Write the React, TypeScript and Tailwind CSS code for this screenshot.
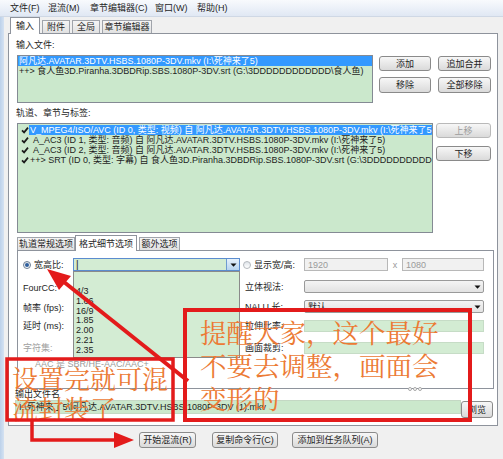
import React from "react";

const UI = "font-['Liberation_Sans','Noto_Sans_CJK_SC',sans-serif]";

function Btn({
  children,
  className = "",
  disabled = false,
}: {
  children: React.ReactNode;
  className?: string;
  disabled?: boolean;
}) {
  return (
    <div
      className={
        "flex items-center justify-center rounded-[3px] border bg-gradient-to-b from-[#f7f7f7] to-[#dadada] whitespace-nowrap " +
        (disabled ? "border-[#b9b9b9] text-[#9c9c9c] " : "border-[#8a8a8a] text-[#1e1e1e] ") +
        className
      }
    >
      {children}
    </div>
  );
}

function Check() {
  return (
    <svg width="8" height="8" viewBox="0 0 8 8">
      <path d="M1 4.3 L3.1 6.4 L7 1.6" fill="none" stroke="#1b1b1b" strokeWidth="1.7" />
    </svg>
  );
}

function Radio({ checked = false, disabled = false }: { checked?: boolean; disabled?: boolean }) {
  return (
    <div
      className={
        "w-[8px] h-[8px] shrink-0 rounded-full border flex items-center justify-center bg-gradient-to-b from-[#dfe4ea] to-[#ffffff] " +
        (disabled ? "border-[#b4b8bd]" : "border-[#6f7f94]")
      }
    >
      {checked && <div className="w-[4px] h-[4px] rounded-full bg-[#2f5f9e]" />}
    </div>
  );
}

function Arrow() {
  return (
    <svg width="7" height="4" viewBox="0 0 7 4">
      <path d="M0.5 0.5 L6.5 0.5 L3.5 3.8 Z" fill="#111" />
    </svg>
  );
}

function Combo({ className = "", text = "" }: { className?: string; text?: string }) {
  return (
    <div
      className={
        "flex items-center border rounded-[2px] border-[#9a9a9a] bg-gradient-to-b from-[#f4f4f4] to-[#e2e2e2] " +
        className
      }
    >
      <div className="flex-1 pl-[3px] leading-[10px] whitespace-nowrap overflow-hidden">{text}</div>
      <div className="w-[12px] h-full flex items-center justify-center">
        <Arrow />
      </div>
    </div>
  );
}

const TAB_OFF =
  "h-[13px] bg-gradient-to-b from-[#f5f5f5] to-[#e1e1e1] border border-b-0 border-[#a0a4ab] flex items-center justify-center whitespace-nowrap";
const TAB_ON =
  "relative z-10 -mb-px bg-white border border-b-0 border-[#8e939c] flex items-center justify-center whitespace-nowrap";

export default function App() {
  return (
    <div className={"relative w-[503px] h-[459px] overflow-hidden bg-[#f0f0f0] text-[9px] leading-[10px] text-[#1e1e1e] " + UI}>
      {/* menu bar */}
      <div className="h-[17px] flex items-center pl-[10px] bg-gradient-to-b from-[#f8fafd] to-[#e0e8f4] border-b border-[#cfd8e5] whitespace-nowrap">
        <span className="w-[38px]">文件(F)</span>
        <span className="w-[42px]">混流(M)</span>
        <span className="w-[65px]">章节编辑器(C)</span>
        <span className="w-[42px]">窗口(W)</span>
        <span>帮助(H)</span>
      </div>

      <div className="flex h-[442px]">
        <div className="w-[4px] bg-gradient-to-r from-[#bcd1ea] to-[#d5e2f2]" />
        <div className="w-[499px] pl-[4px] flex flex-col">
          {/* main tabs */}
          <div className="h-[16px] flex items-end pl-[2px]">
            <div className={TAB_ON + " w-[30px] h-[17px]"}>输入</div>
            <div className={TAB_OFF + " ml-[2px] w-[28px]"}>附件</div>
            <div className={TAB_OFF + " ml-[2px] w-[28px]"}>全局</div>
            <div className={TAB_OFF + " ml-[2px] w-[50px]"}>章节编辑器</div>
          </div>

          {/* outer panel */}
          <div className="w-[490px] h-[393px] bg-white border border-[#8e939c] flex flex-col pl-[7px] pt-[6px]">
            <div className="h-[10px]">输入文件:</div>
            <div className="mt-[5px] flex">
              <div className="ml-[1px] w-[356px] h-[48px] border border-[#848a94] bg-[#cbe8cc] overflow-hidden whitespace-nowrap">
                <div className="h-[10px] bg-[#3399ff] text-white pl-[1px]">{"阿凡达.AVATAR.3DTV.HSBS.1080P-3DV.mkv (I:\\死神来了5)"}</div>
                <div className="h-[10px] pl-[1px]">{"++> 食人鱼3D.Piranha.3DBDRip.SBS.1080P-3DV.srt (G:\\3DDDDDDDDDDDD\\食人鱼)"}</div>
              </div>
              <div className="ml-[6px] mt-[1px] grid grid-cols-[52px_53px] gap-x-[7px] gap-y-[6px] h-[37px]">
                <Btn className="h-[15px]">添加</Btn>
                <Btn className="h-[15px]">追加合并</Btn>
                <Btn className="h-[16px]">移除</Btn>
                <Btn className="h-[16px]">全部移除</Btn>
              </div>
            </div>

            <div className="mt-[5px] h-[10px]">轨道、章节与标签:</div>
            <div className="mt-[5px] flex">
              <div className="ml-[1px] w-[416px] h-[110px] border border-[#848a94] bg-[#cbe8cc] overflow-hidden whitespace-nowrap pt-[1px]">
                <div className="h-[10px] flex">
                  <div className="w-[14px] pl-[3px] flex items-center"><Check /></div>
                  <div className="flex-1 bg-[#3399ff] text-white pl-[1px]">{"V_MPEG4/ISO/AVC (ID 0, 类型: 视频) 自 阿凡达.AVATAR.3DTV.HSBS.1080P-3DV.mkv (I:\\死神来了5)"}</div>
                </div>
                <div className="h-[10px] flex">
                  <div className="w-[14px] pl-[3px] flex items-center"><Check /></div>
                  <div className="flex-1 pl-[1px]">{"A_AC3 (ID 1, 类型: 音频) 自 阿凡达.AVATAR.3DTV.HSBS.1080P-3DV.mkv (I:\\死神来了5)"}</div>
                </div>
                <div className="h-[10px] flex">
                  <div className="w-[14px] pl-[3px] flex items-center"><Check /></div>
                  <div className="flex-1 pl-[1px]">{"A_AC3 (ID 2, 类型: 音频) 自 阿凡达.AVATAR.3DTV.HSBS.1080P-3DV.mkv (I:\\死神来了5)"}</div>
                </div>
                <div className="h-[10px] flex">
                  <div className="w-[14px] pl-[3px] flex items-center"><Check /></div>
                  <div className="flex-1 pl-[1px]">{"++> SRT (ID 0, 类型: 字幕) 自 食人鱼3D.Piranha.3DBDRip.SBS.1080P-3DV.srt (G:\\3DDDDDDDDDDDD\\食人鱼)"}</div>
                </div>
              </div>
              <div className="ml-[3px] w-[55px] flex flex-col">
                <Btn disabled className="h-[15px]">上移</Btn>
                <Btn className="mt-[8px] h-[15px]">下移</Btn>
              </div>
            </div>

            {/* inner tabs */}
            <div className="mt-[3px] ml-[1px] h-[14px] flex items-end">
              <div className={TAB_OFF + " w-[58px]"}>轨道常规选项</div>
              <div className={TAB_ON + " w-[62px] h-[16px]"}>格式细节选项</div>
              <div className={TAB_OFF + " ml-[2px] w-[41px]"}>额外选项</div>
            </div>

            {/* inner panel */}
            <div className="relative ml-[1px] w-[477px] h-[139px] border border-[#8e939c] bg-white flex flex-col whitespace-nowrap">
              <div className="mt-[7px] h-[13px] flex items-center">
                <div className="w-[222px] pl-[5px] flex items-center">
                  <Radio checked />
                  <span className="ml-[3px] w-[39px]">宽高比:</span>
                  <div className="w-[167px] h-[13px] border border-[#5b8ccf] bg-[#d3ecd3] flex items-center">
                    <div className="flex-1 pl-[2px] text-[10px] leading-[10px]">|</div>
                    <div className="w-[13px] h-[11px] bg-gradient-to-b from-[#e6f1fb] to-[#b7d4ef] border-l border-[#6e9bd0] flex items-center justify-center">
                      <Arrow />
                    </div>
                  </div>
                </div>
                <div className="ml-[3px] flex items-center">
                  <Radio disabled />
                  <span className="ml-[3px] w-[50px]">显示宽/高:</span>
                  <div className="w-[84px] h-[13px] border border-[#b8b8b8] bg-[#f1f1f1] text-[#9a9a9a] pl-[3px] flex items-center">1920</div>
                  <span className="w-[14px] text-center text-[#9a9a9a]">x</span>
                  <div className="w-[82px] h-[13px] border border-[#b8b8b8] bg-[#f1f1f1] text-[#9a9a9a] pl-[3px] flex items-center">1080</div>
                </div>
              </div>

              <div className="mt-[9px] h-[13px] flex items-center">
                <div className="w-[222px] pl-[5px] pt-[2px]">FourCC:</div>
                <div className="ml-[5px] flex items-center">
                  <span className="w-[59px]">立体视法:</span>
                  <Combo className="w-[180px] h-[13px]" />
                </div>
              </div>

              <div className="mt-[7px] h-[13px] flex items-center">
                <div className="w-[222px] pl-[5px] pt-[2px]">帧率 (fps):</div>
                <div className="ml-[5px] flex items-center">
                  <span className="w-[59px]">NALU 长:</span>
                  <Combo className="w-[180px] h-[13px]" text="默认" />
                </div>
              </div>

              <div className="mt-[7px] h-[12px] flex items-center">
                <div className="w-[222px] pl-[5px]">延时 (ms):</div>
                <div className="ml-[5px] flex items-center">
                  <span className="w-[59px]">拉伸比率:</span>
                  <div className="w-[180px] h-[12px] border border-[#c6dcc6] bg-[#d3ecd3]" />
                </div>
              </div>

              <div className="mt-[10px] h-[12px] flex items-center">
                <div className="w-[222px] pl-[5px] text-[#a0a0a0]">字符集:</div>
                <div className="ml-[5px] flex items-center">
                  <span className="w-[59px]">画面裁剪:</span>
                  <div className="w-[180px] h-[12px] border border-[#c6dcc6] bg-[#d3ecd3]" />
                </div>
              </div>

              <div className="mt-[5px] h-[10px] pl-[17px] text-[#9a9a9a]">AAC 是 SBR/HE-AAC/AAC+</div>

              {/* splitter grip */}
              <div className="absolute left-[390px] bottom-[-3px] flex gap-[1px]">
                <div className="w-[4px] h-[4px] rounded-full border border-[#a8a8a8] bg-white" />
                <div className="w-[4px] h-[4px] rounded-full border border-[#a8a8a8] bg-white" />
                <div className="w-[4px] h-[4px] rounded-full border border-[#a8a8a8] bg-white" />
              </div>

              {/* open dropdown list */}
              <div className="absolute left-[55px] top-[20px] w-[167px] h-[87px] bg-[#d3ecd3] border border-[#8a8a8a] pl-[2px] pt-[15px]">
                {["4/3", "1.66", "16/9", "1.85", "2.00", "2.21", "2.35"].map((v) => (
                  <div key={v} className="h-[9.75px] leading-[9.75px]">
                    {v}
                  </div>
                ))}
              </div>
            </div>

            <div className="h-[10px] -ml-[1px]">输出文件名</div>
            <div className="mt-[1px] flex">
              <div className="-ml-[1px] w-[446px] h-[14px] border border-[#c4d8c4] bg-[#cbe8cc] pl-[3px] flex items-center whitespace-nowrap overflow-hidden">
                {"I:\\死神来了5\\阿凡达.AVATAR.3DTV.HSBS.1080P-3DV (1).mkv"}
              </div>
              <Btn className="mt-[1px] w-[32px] h-[17px]">浏览</Btn>
            </div>
          </div>

          {/* bottom buttons */}
          <div className="mt-[6px] flex pl-[131px]">
            <Btn className="w-[57px] h-[16px]">开始混流(R)</Btn>
            <Btn className="ml-[16px] w-[66px] h-[16px]">复制命令行(C)</Btn>
            <Btn className="ml-[14px] w-[86px] h-[16px]">添加到任务队列(A)</Btn>
          </div>
        </div>
      </div>

      {/* annotations */}
      <div className="absolute left-[12px] top-[363px] text-[26px] leading-[30px] text-[#ec7a34] whitespace-nowrap font-['Noto_Serif_CJK_SC','Noto_Sans_CJK_SC',serif]">
        <div>设置完就可混</div>
        <div>流封装了</div>
      </div>
      <div className="absolute left-[200px] top-[315px] text-[26.5px] leading-[33px] text-[#ec7a34] whitespace-nowrap font-['Noto_Serif_CJK_SC','Noto_Sans_CJK_SC',serif]">
        <div>提醒大家，这个最好</div>
        <div>不要去调整，画面会</div>
        <div>变形的</div>
      </div>
      <svg className="absolute left-0 top-0 pointer-events-none" width="503" height="459" viewBox="0 0 503 459">
        <rect x="7" y="359" width="166" height="61" fill="none" stroke="#e31b1b" strokeWidth="3.5" />
        <rect x="185" y="310" width="285" height="110" fill="none" stroke="#e31b1b" strokeWidth="4" />
        <line x1="188" y1="381" x2="64" y2="282" stroke="#e31b1b" strokeWidth="4" />
        <polygon points="47,269 71,276 59,290" fill="#e31b1b" />
        <polyline points="32,420 32,440 116,440" fill="none" stroke="#e31b1b" strokeWidth="3.5" />
        <polygon points="114,432 134,440 114,448" fill="#e31b1b" />
      </svg>
    </div>
  );
}
